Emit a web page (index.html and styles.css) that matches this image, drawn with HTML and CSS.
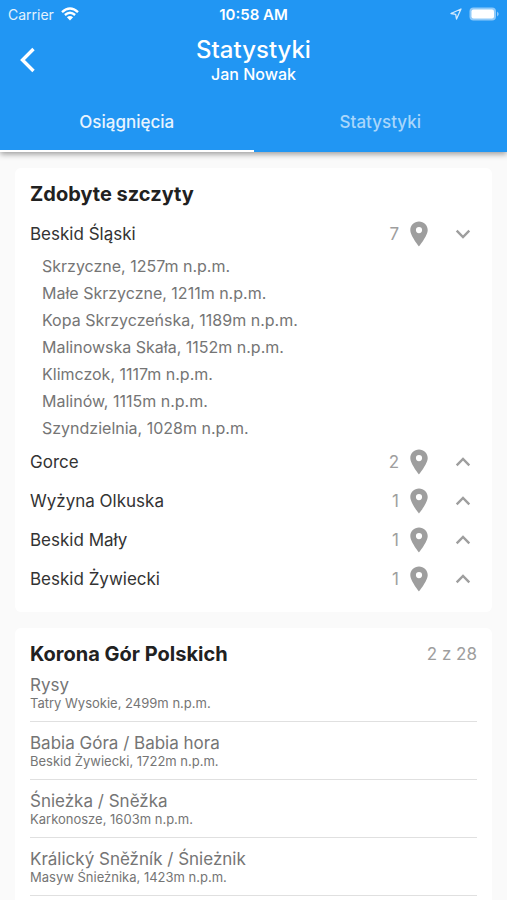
FILE: index.html
```
<!DOCTYPE html>
<html lang="pl">
<head>
<meta charset="utf-8">
<meta name="viewport" content="width=device-width, initial-scale=1">
<title>Statystyki</title>
<link rel="stylesheet" href="styles.css">
</head>
<body>
<svg class="defs" aria-hidden="true">
  <symbol id="pin" viewBox="0 0 18 26"><path fill-rule="evenodd" d="M9 0.5C4.1 0.5 0.3 4.3 0.3 9.1C0.3 15 9 25.500 9 25.500S17.700 15 17.700 9.100C17.700 4.300 13.900 0.500 9 0.500ZM9 6A3.100 3.100 0 1 1 9 12.200A3.100 3.100 0 1 1 9 6Z"/></symbol>
  <symbol id="down" viewBox="0 0 16 10"><path d="M1.700 1.700L8 8L14.300 1.700"/></symbol>
  <symbol id="up" viewBox="0 0 16 10"><path d="M1.700 8.300L8 2L14.300 8.300"/></symbol>
</svg>
<header class="app-header">
  <div class="status-bar">
    <div class="carrier">
      <span>Carrier</span>
      <svg class="wifi" viewBox="0 0 18 14" aria-hidden="true"><path d="M1 5.200Q9 -2 17 5.200M3.900 8Q9 3.500 14.100 8"/><path class="solid" d="M9 13.500L5.900 10.200Q9 7.600 12.100 10.200Z"/></svg>
    </div>
    <span class="clock">10:58 AM</span>
    <div class="indicators">
      <svg class="location" viewBox="0 0 12 12" aria-hidden="true"><path d="M11 1L1 5.500L5.700 6.300L6.500 11Z"/></svg>
      <svg class="battery" viewBox="0 0 30 14" aria-hidden="true"><rect class="shell" x="0.500" y="0.500" width="26.500" height="13" rx="4"/><rect class="charge" x="2.500" y="2.500" width="22.500" height="9" rx="2"/><path class="cap" d="M28 4.500Q31.500 7 28 9.500Z"/></svg>
    </div>
  </div>
  <div class="title-bar">
    <button class="back" type="button" aria-label="Wstecz"><svg viewBox="0 0 16 26" aria-hidden="true"><path d="M13.500 2L2.500 13L13.500 24"/></svg></button>
    <div class="titles">
      <h1>Statystyki</h1>
      <p>Jan Nowak</p>
    </div>
  </div>
  <nav class="tabs">
    <a class="tab active" href="#osiagniecia" aria-current="page">Osiągnięcia</a>
    <a class="tab" href="#statystyki">Statystyki</a>
  </nav>
</header>
<main class="content" id="osiagniecia">
  <section class="card">
    <h2>Zdobyte szczyty</h2>
    <button class="range" type="button" aria-expanded="true"><span class="name">Beskid Śląski</span><span class="count">7</span><svg class="pin"><use href="#pin"/></svg><svg class="chevron"><use href="#down"/></svg></button>
    <ul class="peaks">
      <li>Skrzyczne, 1257m n.p.m.</li>
      <li>Małe Skrzyczne, 1211m n.p.m.</li>
      <li>Kopa Skrzyczeńska, 1189m n.p.m.</li>
      <li>Malinowska Skała, 1152m n.p.m.</li>
      <li>Klimczok, 1117m n.p.m.</li>
      <li>Malinów, 1115m n.p.m.</li>
      <li>Szyndzielnia, 1028m n.p.m.</li>
    </ul>
    <button class="range" type="button" aria-expanded="false"><span class="name">Gorce</span><span class="count">2</span><svg class="pin"><use href="#pin"/></svg><svg class="chevron"><use href="#up"/></svg></button>
    <button class="range" type="button" aria-expanded="false"><span class="name">Wyżyna Olkuska</span><span class="count">1</span><svg class="pin"><use href="#pin"/></svg><svg class="chevron"><use href="#up"/></svg></button>
    <button class="range" type="button" aria-expanded="false"><span class="name">Beskid Mały</span><span class="count">1</span><svg class="pin"><use href="#pin"/></svg><svg class="chevron"><use href="#up"/></svg></button>
    <button class="range" type="button" aria-expanded="false"><span class="name">Beskid Żywiecki</span><span class="count">1</span><svg class="pin"><use href="#pin"/></svg><svg class="chevron"><use href="#up"/></svg></button>
  </section>
  <section class="card crown">
    <div class="card-head">
      <h2>Korona Gór Polskich</h2>
      <span class="progress">2 z 28</span>
    </div>
    <ul class="summits">
      <li><h3>Rysy</h3><p>Tatry Wysokie, 2499m n.p.m.</p></li>
      <li><h3>Babia Góra / Babia hora</h3><p>Beskid Żywiecki, 1722m n.p.m.</p></li>
      <li><h3>Śnieżka / Sněžka</h3><p>Karkonosze, 1603m n.p.m.</p></li>
      <li><h3>Králický Sněžník / Śnieżnik</h3><p>Masyw Śnieżnika, 1423m n.p.m.</p></li>
    </ul>
  </section>
</main>
</body>
</html>
```
FILE: styles.css
```
* {
  box-sizing: border-box;
  margin: 0;
  padding: 0;
}

body {
  display: flex;
  flex-direction: column;
  min-height: 100vh;
  background: #fafafa;
  color: #212121;
  font-family: Inter, "Liberation Sans", sans-serif;
}

button {
  border: 0;
  background: none;
  color: inherit;
  font: inherit;
  cursor: pointer;
}

ul {
  list-style: none;
}

.defs {
  position: absolute;
  width: 0;
  height: 0;
}

.app-header {
  background: #2196f3;
  color: #fff;
  box-shadow: 0 2px 6px rgba(0, 0, 0, 0.4);
}

.status-bar {
  display: grid;
  grid-template-columns: 1fr auto 1fr;
  align-items: center;
  height: 28px;
  padding: 0 8px;
  font-size: 14px;
}

.carrier,
.indicators {
  display: flex;
  align-items: center;
  gap: 7px;
}

.carrier {
  color: #e3f2fd;
}

.indicators {
  justify-content: flex-end;
}

.clock {
  font-size: 15px;
  font-weight: 600;
}

.wifi {
  width: 18px;
  height: 14px;
  fill: none;
  stroke: #fff;
  stroke-width: 2.4;
}

.wifi .solid {
  fill: #fff;
  stroke: none;
}

.location {
  width: 12px;
  height: 12px;
  fill: none;
  stroke: #d3eafd;
  stroke-width: 1.3;
  stroke-linejoin: round;
}

.battery {
  width: 30px;
  height: 14px;
}

.shell,
.cap {
  fill: #90caf9;
}

.charge {
  fill: #fff;
}

.title-bar {
  display: grid;
  grid-template-columns: 56px 1fr 56px;
  align-items: center;
  height: 64px;
}

.back {
  display: flex;
  align-items: center;
  justify-content: center;
  height: 48px;
}

.back svg {
  width: 16px;
  height: 26px;
  fill: none;
  stroke: #fff;
  stroke-width: 3.400;
}

.titles {
  text-align: center;
}

.titles h1 {
  font-size: 24px;
  font-weight: 500;
  line-height: 28px;
}

.titles p {
  font-size: 16px;
  font-weight: 500;
  line-height: 20px;
}

.tabs {
  display: flex;
}

.tab {
  flex: 1;
  height: 60px;
  border-bottom: 2px solid transparent;
  color: #a9d6fb;
  font-size: 17px;
  font-weight: 500;
  line-height: 60px;
  text-align: center;
  text-decoration: none;
}

.tab.active {
  border-color: #fff;
  color: #e8f4fe;
}

.content {
  display: flex;
  flex: 1;
  flex-direction: column;
  gap: 16px;
  padding: 16px 15px 0;
}

.card {
  padding: 12px 15px 14px;
  border-radius: 6px;
  background: #fff;
}

.card h2 {
  font-size: 20px;
  font-weight: 700;
  line-height: 28px;
}

.range {
  display: flex;
  align-items: center;
  width: 100%;
  height: 39px;
  padding-right: 6px;
  color: #333;
  font-size: 17px;
  text-align: left;
}

.card h2 + .range {
  margin-top: 6px;
}

.name {
  flex: 1;
}

.count,
.progress {
  color: #9e9e9e;
  font-size: 17px;
}

.pin {
  width: 18px;
  height: 26px;
  margin: 0 27px 0 11px;
  fill: #9e9e9e;
}

.chevron {
  width: 16px;
  height: 10px;
  fill: none;
  stroke: #9e9e9e;
  stroke-width: 2.400;
}

.peaks {
  padding-left: 12px;
  color: #757575;
  font-size: 16px;
  line-height: 27px;
}

.crown {
  flex: 1;
  padding-bottom: 0;
  border-radius: 6px 6px 0 0;
}

.card-head {
  display: flex;
  align-items: center;
  justify-content: space-between;
}

.summits {
  margin-top: -4px;
  color: #757575;
}

.summits li {
  height: 58px;
  padding-top: 11px;
  border-bottom: 1px solid #e0e0e0;
}

.summits h3 {
  font-size: 17px;
  font-weight: 400;
  line-height: 20px;
}

.summits p {
  font-size: 13px;
  line-height: 17px;
}
```
